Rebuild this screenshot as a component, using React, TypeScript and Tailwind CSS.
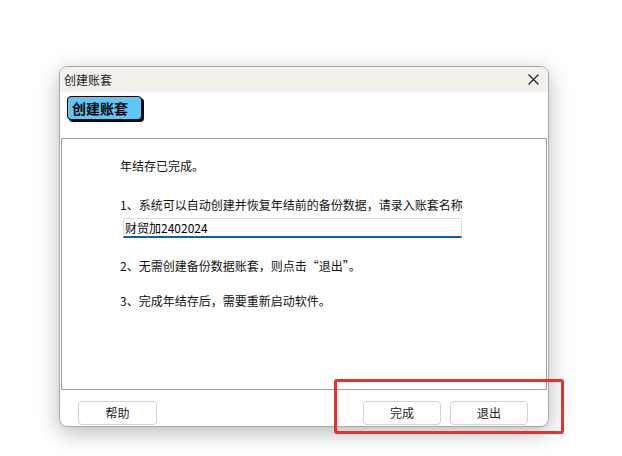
import React from "react";

const font = { fontFamily: '"Noto Sans CJK SC", "Liberation Sans", sans-serif' };

export default function App() {
  return (
    <div className="relative w-[622px] h-[456px] bg-white overflow-hidden" style={font}>
      <div className="pl-[59px] pt-[66px]">
        <div className="w-[490px] h-[361px] flex flex-col bg-white border border-[#a9a9a9] rounded-[8px] overflow-hidden shadow-[0_6px_22px_rgba(0,0,0,0.28)]">
          {/* Title bar */}
          <div className="h-[25px] shrink-0 bg-[#f4f1ea] flex items-center justify-between pl-[4px] pr-[9px]">
            <span className="text-[12px] leading-[16px] text-[#222]">创建账套</span>
            <svg width="11" height="11" viewBox="0 0 11 11">
              <path d="M0.5 0.5 L10.5 10.5 M10.5 0.5 L0.5 10.5" stroke="#1a1a1a" strokeWidth="1.1" />
            </svg>
          </div>
          {/* Badge area */}
          <div className="pl-[7px] pt-[4px] h-[46px] shrink-0">
            <div className="w-[75px] h-[24px] bg-[#5fc6f6] border border-black rounded-[4px] shadow-[2px_2px_0_#000] flex items-center pl-[4px]">
              <span className="text-[14px] font-bold leading-[16px] text-black">创建账套</span>
            </div>
          </div>
          {/* Content panel */}
          <div className="ml-[1px] mr-[1px] h-[252px] shrink-0 border border-[#a0a0a0] pl-[58px] pt-[19px] text-[12px] leading-[16px] text-[#111]">
            <div>年结存已完成。</div>
            <div className="mt-[23px]">1、系统可以自动创建并恢复年结前的备份数据，请录入账套名称</div>
            <div className="mt-[5px] ml-[3px] w-[339px] h-[20px] border border-[#dedede] border-b-[2px] border-b-[#0f5fae] flex items-center pl-[1px] text-[12px] text-black">
              财贸加2402024
            </div>
            <div className="mt-[20px]">2、无需创建备份数据账套，则点击“退出”。</div>
            <div className="mt-[19px]">3、完成年结存后，需要重新启动软件。</div>
          </div>
          {/* Footer */}
          <div className="flex-1 flex items-start justify-between pl-[18px] pr-[20px] pt-[11px]">
            <button className="w-[79px] h-[24px] bg-white border border-[#d2d2d2] rounded-[4px] text-[12px] text-[#222]">帮助</button>
            <div className="flex gap-[9px]">
              <button className="w-[78px] h-[24px] bg-white border border-[#d2d2d2] rounded-[4px] text-[12px] text-[#222]">完成</button>
              <button className="w-[78px] h-[24px] bg-white border border-[#d2d2d2] rounded-[4px] text-[12px] text-[#222]">退出</button>
            </div>
          </div>
        </div>
      </div>
      {/* Red highlight box */}
      <div className="absolute left-[334px] top-[379px] w-[230px] h-[55px] border-[3px] border-[#e8312a] rounded-[3px]" />
    </div>
  );
}
